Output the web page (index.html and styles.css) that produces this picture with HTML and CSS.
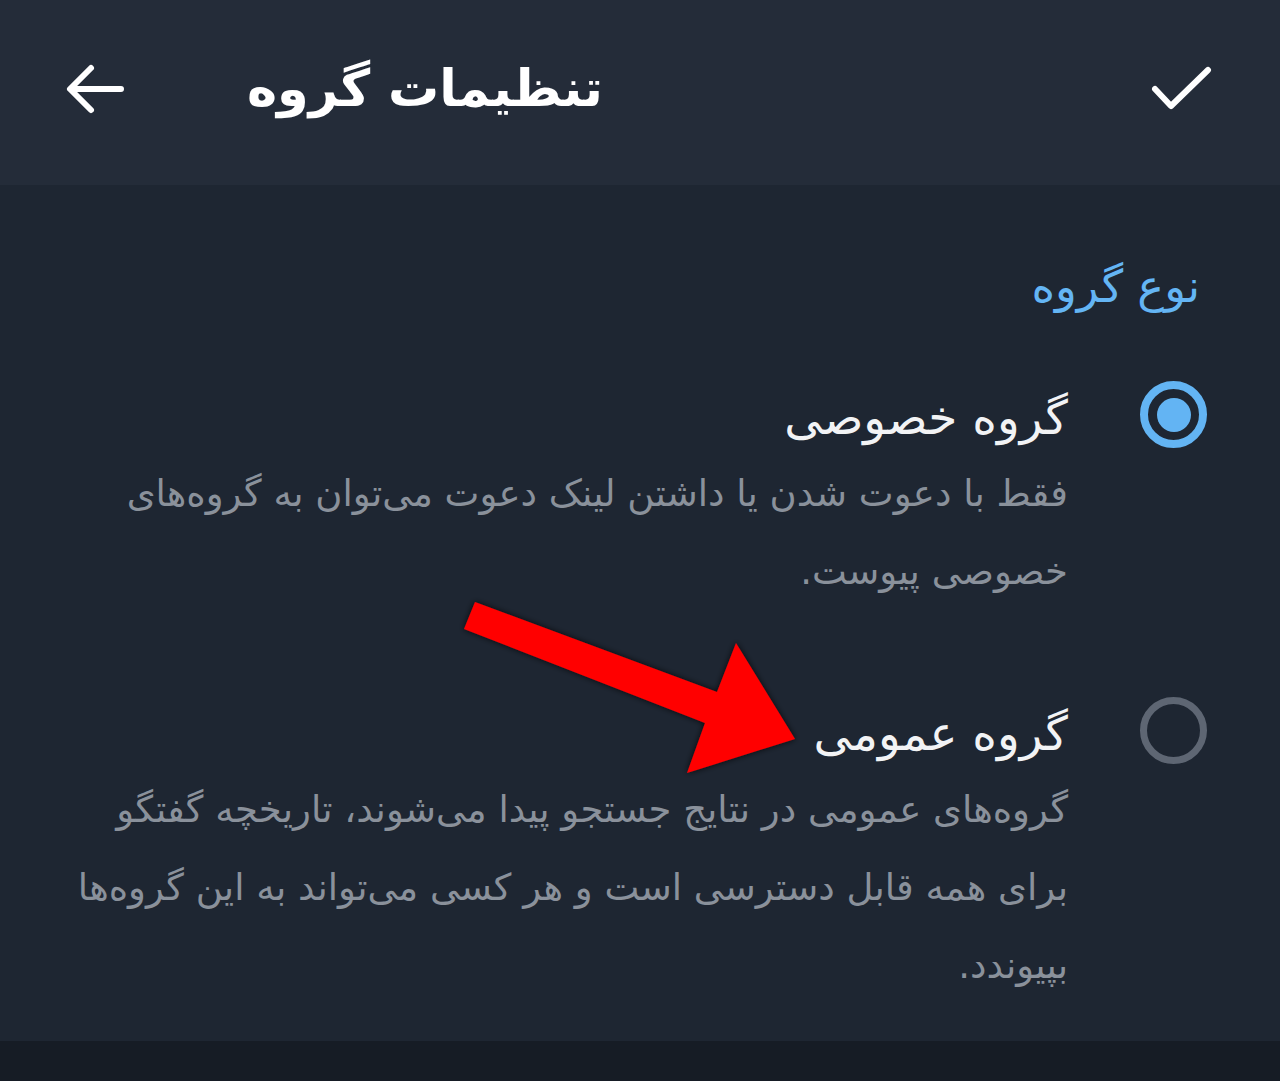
FILE: index.html
```html
<!DOCTYPE html>
<html lang="fa">
<head>
<meta charset="utf-8">
<title>تنظیمات گروه</title>
<link rel="stylesheet" href="styles.css">
</head>
<body>
<div class="screen">
  <header class="appbar">
    <button class="icon-btn back" aria-label="back">
      <svg width="60" height="56" viewBox="0 0 60 56"><path d="M56 26 H6 M26 5 L5 26 L26 47" fill="none" stroke="#fff" stroke-width="6" stroke-linecap="round" stroke-linejoin="round"/></svg>
    </button>
    <h1 class="title">تنظیمات گروه</h1>
    <button class="icon-btn done" aria-label="done">
      <svg width="64" height="50" viewBox="0 0 64 50"><path d="M5 23 L21 40 L58 4" fill="none" stroke="#fff" stroke-width="6" stroke-linecap="round" stroke-linejoin="round"/></svg>
    </button>
  </header>

  <main class="content" dir="rtl">
    <h2 class="section-title">نوع گروه</h2>

    <div class="option">
      <span class="radio checked"></span>
      <div class="option-text">
        <div class="option-title">گروه خصوصی</div>
        <p class="option-desc">فقط با دعوت شدن یا داشتن لینک دعوت می‌توان به گروه‌های<br>خصوصی پیوست.</p>
      </div>
    </div>

    <div class="option second">
      <span class="radio"></span>
      <div class="option-text">
        <div class="option-title">گروه عمومی</div>
        <p class="option-desc">گروه‌های عمومی در نتایج جستجو پیدا می‌شوند، تاریخچه گفتگو<br>برای همه قابل دسترسی است و هر کسی می‌تواند به این گروه‌ها<br>بپیوندد.</p>
      </div>
    </div>
  </main>

  <div class="bottom-bar"></div>

  <svg class="annotation" width="1280" height="1081" viewBox="0 0 1280 1081">
    <defs>
      <filter id="sh" x="-10%" y="-10%" width="120%" height="120%">
        <feDropShadow dx="0" dy="0" stdDeviation="3" flood-color="#000" flood-opacity="0.8"/>
      </filter>
    </defs>
    <polygon points="475,602 717,692 736,643 795,739 687,773 705,723 464,629" fill="#ff0000" filter="url(#sh)"/>
  </svg>
</div>
</body>
</html>
```

FILE: styles.css
```css
* { box-sizing: border-box; }
html, body { margin: 0; padding: 0; }
body {
  background: #1e2632;
  font-family: "DejaVu Sans", "Noto Sans", sans-serif;
  width: 1280px;
  height: 1081px;
  overflow: hidden;
}
.screen {
  position: relative;
  width: 1280px;
  height: 1081px;
  display: flex;
  flex-direction: column;
}
.appbar {
  height: 185px;
  background: #242c39;
  display: flex;
  align-items: center;
  padding: 0 64px 0 64px;
  direction: ltr;
}
.icon-btn {
  background: none;
  border: 0;
  padding: 0;
  display: flex;
  align-items: center;
  justify-content: center;
}
.back { margin-left: 1px; margin-top: -4px; }
.title {
  margin: -8px 0 0 122px;
  color: #ffffff;
  font-size: 51px;
  font-weight: bold;
  line-height: 1;
  flex: 1;
  text-align: left;
}
.done { margin-top: -4px; margin-right: 2px; }

.content {
  flex: 1;
  padding: 70px 73px 0 50px;
}
.section-title {
  margin: 0 7px 0 0;
  color: #64b5f4;
  font-size: 45px;
  font-weight: normal;
  line-height: 64px;
  height: 64px;
}
.option {
  display: flex;
  align-items: flex-start;
  gap: 72px;
  margin-top: 62px;
}
.option.second { margin-top: 86px; }
.radio {
  flex: 0 0 67px;
  width: 67px;
  height: 67px;
  border-radius: 50%;
  border: 7px solid #5e6673;
  margin-top: 0;
  display: flex;
  align-items: center;
  justify-content: center;
}
.radio.checked {
  border: 8px solid #63b4f3;
}
.radio.checked::after {
  content: "";
  width: 34px;
  height: 34px;
  border-radius: 50%;
  background: #63b4f3;
}
.option-text { flex: 1; }
.option-title {
  color: #f2f3f5;
  font-size: 47px;
  line-height: 74px;
}
.option-desc {
  margin: 0;
  color: #8a919b;
  font-size: 37px;
  line-height: 78px;
  white-space: nowrap;
}
.bottom-bar {
  height: 40px;
  background: #161c25;
}
.annotation {
  position: absolute;
  left: 0;
  top: 0;
  pointer-events: none;
}
```
